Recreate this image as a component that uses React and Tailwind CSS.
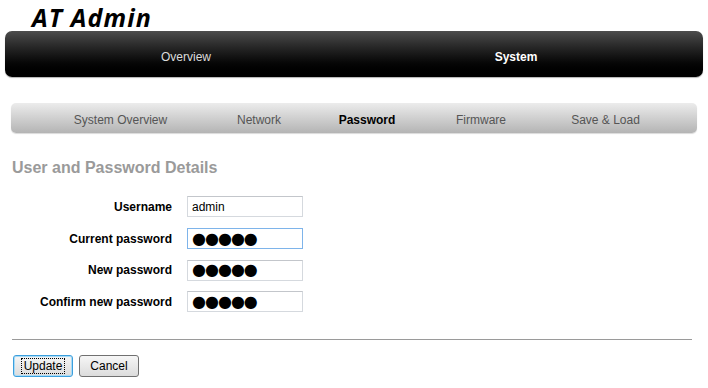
import React from "react";

const Field = ({ label, children }) => (
  <div className="flex items-center h-[31.7px]">
    <div className="w-[172px] text-right font-bold text-[12px] text-black pr-0">{label}</div>
    <div className="ml-[15px]">{children}</div>
  </div>
);

const Dots = ({ focused }) => (
  <div
    className={`w-[116px] h-[21px] border bg-white flex items-center pl-[4px] overflow-hidden ${
      focused ? "border-[#7eb4ea]" : "border-[#d5d9de] border-t-[#c3c6cb]"
    }`}
  >
    <span className="text-[16px] leading-none text-black tracking-[-1px]" style={{ fontFamily: '"DejaVu Sans", sans-serif' }}>
      ●●●●●
    </span>
  </div>
);

export default function App() {
  return (
    <div className="w-[708px] h-[388px] bg-white overflow-hidden" style={{ fontFamily: '"Liberation Sans", Arial, sans-serif' }}>
      <div className="h-[31px] pl-[32px] pr-[8px]">
        <div
          className="text-[25px] font-bold italic leading-[34px] text-black tracking-[1.1px] pr-[4px]"
          style={{ fontFamily: '"Open Sans", sans-serif' }}
        >
          AT Admin
        </div>
      </div>
      <div className="mx-[5px] h-[46px] rounded-[7px] bg-gradient-to-b from-[#4d4d4d] to-[#000000] flex items-center pt-[6px] px-[16px] shadow-[0_1px_1px_rgba(0,0,0,0.3)]">
        <div className="flex-1 text-center text-[12px] text-[#dcdcdc]">Overview</div>
        <div className="flex-1 text-center text-[12px] font-bold text-white pr-[6px]">System</div>
      </div>
      <div className="mx-[11px] mt-[26px] h-[30px] rounded-[5px] bg-gradient-to-b from-[#ececec] to-[#b4b4b4] flex items-center pt-[3px] pl-[29px] shadow-[0_1px_1px_rgba(0,0,0,0.15)]">
        <div className="w-[161px] text-center text-[12px] text-[#555]">System Overview</div>
        <div className="w-[116px] text-center text-[12px] text-[#555]">Network</div>
        <div className="w-[100px] text-center text-[12px] font-bold text-black">Password</div>
        <div className="w-[128px] text-center text-[12px] text-[#555]">Firmware</div>
        <div className="w-[121px] text-center text-[12px] text-[#555]">Save &amp; Load</div>
      </div>
      <div className="ml-[12px] mt-[25px] text-[16px] font-bold text-[#9a9a9a] leading-[20px]">
        User and Password Details
      </div>
      <div className="mt-[13px] flex flex-col">
        <Field label="Username">
          <div className="w-[116px] h-[21px] border border-[#d5d9de] border-t-[#c3c6cb] bg-white flex items-center pl-[4px] text-[12px] text-black">
            admin
          </div>
        </Field>
        <Field label="Current password">
          <Dots focused />
        </Field>
        <Field label="New password">
          <Dots />
        </Field>
        <Field label="Confirm new password">
          <Dots />
        </Field>
      </div>
      <div className="ml-[12px] mr-[16px] mt-[21px] h-px bg-[#9a9a9a]" />
      <div className="flex gap-[6px] ml-[13px] mt-[15px]">
        <button className="w-[60px] h-[22px] rounded-[3px] border border-[#3c9fdd] bg-gradient-to-b from-[#f6f6f6] to-[#dcdcdc] text-[12px] text-black flex items-center justify-center shadow-[inset_0_0_0_1px_#a9dbf6]">
          <span className="border border-dotted border-black px-[2px] leading-[14px]">Update</span>
        </button>
        <button className="w-[60px] h-[22px] rounded-[3px] border border-[#707070] bg-gradient-to-b from-[#f6f6f6] to-[#dcdcdc] text-[12px] text-black flex items-center justify-center">
          Cancel
        </button>
      </div>
    </div>
  );
}
